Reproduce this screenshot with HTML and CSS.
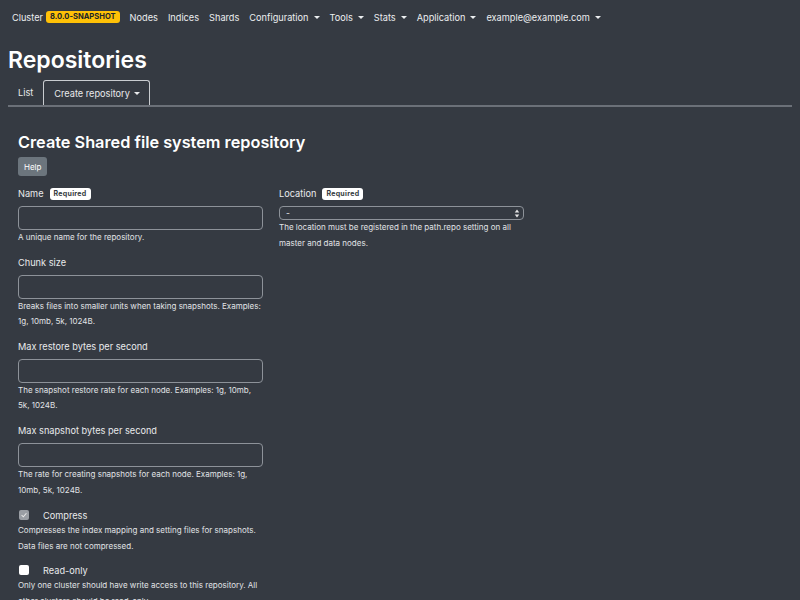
FILE: index.html
```html
<!DOCTYPE html>
<html>
<head>
<meta charset="utf-8">
<link rel="stylesheet" href="styles.css">
</head>
<body>
<nav class="navbar">
  <span class="nav-item">Cluster <span class="badge-version">8.0.0-SNAPSHOT</span></span>
  <span class="nav-item">Nodes</span>
  <span class="nav-item">Indices</span>
  <span class="nav-item">Shards</span>
  <span class="nav-item dropdown">Configuration</span>
  <span class="nav-item dropdown">Tools</span>
  <span class="nav-item dropdown">Stats</span>
  <span class="nav-item dropdown">Application</span>
  <span class="nav-item dropdown">example@example.com</span>
</nav>
<main class="page">
  <h1 class="page-title">Repositories</h1>
  <div class="tabs">
    <span class="tab">List</span>
    <span class="tab active dropdown">Create repository</span>
  </div>
  <section class="card">
    <h2 class="card-title">Create Shared file system repository</h2>
    <button class="btn-help">Help</button>
    <div class="form-grid">
      <div class="col">
        <div class="group">
          <label class="label">Name <span class="req">Required</span></label>
          <div class="input"></div>
          <div class="help">A unique name for the repository.</div>
        </div>
        <div class="group">
          <label class="label">Chunk size</label>
          <div class="input"></div>
          <div class="help">Breaks files into smaller units when taking snapshots. Examples: 1g, 10mb, 5k, 1024B.</div>
        </div>
        <div class="group">
          <label class="label">Max restore bytes per second</label>
          <div class="input"></div>
          <div class="help">The snapshot restore rate for each node. Examples: 1g, 10mb, 5k, 1024B.</div>
        </div>
        <div class="group">
          <label class="label">Max snapshot bytes per second</label>
          <div class="input"></div>
          <div class="help">The rate for creating snapshots for each node. Examples: 1g, 10mb, 5k, 1024B.</div>
        </div>
        <div class="group">
          <div class="check-row"><span class="check checked"><svg viewBox="0 0 10 10" width="8" height="8"><path d="M2 5.2 L4.2 7.3 L8 2.8" fill="none" stroke="#e8e8e8" stroke-width="1.3"/></svg></span><span class="check-label">Compress</span></div>
          <div class="help">Compresses the index mapping and setting files for snapshots. Data files are not compressed.</div>
        </div>
        <div class="group">
          <div class="check-row"><span class="check"></span><span class="check-label">Read-only</span></div>
          <div class="help">Only one cluster should have write access to this repository. All other clusters should be read-only.</div>
        </div>
      </div>
      <div class="col">
        <div class="group">
          <label class="label">Location <span class="req">Required</span></label>
          <div class="select"><span>-</span><svg class="sel-arrows" viewBox="0 0 6 10" width="6" height="9"><path d="M3 0.5 L5.5 4 L0.5 4 Z M3 9.5 L5.5 6 L0.5 6 Z" fill="#e6e6e6"/></svg></div>
          <div class="help">The location must be registered in the path.repo setting on all master and data nodes.</div>
        </div>
      </div>
    </div>
  </section>
</main>
</body>
</html>
```
FILE: styles.css
```css
* { box-sizing: border-box; }
html, body { margin: 0; padding: 0; }
body {
  background: #353a42;
  color: #e9eaec;
  font-family: Inter, "Noto Sans", sans-serif;
  height: 600px;
  overflow: hidden;
}
.navbar {
  display: flex;
  align-items: center;
  height: 34px;
  padding: 0 12px;
  gap: 10px;
  font-size: 9.2px;
  color: #eceef0;
}
.nav-item { display: inline-flex; align-items: center; white-space: nowrap; }
.dropdown::after {
  content: "";
  display: inline-block;
  margin-left: 5px;
  border-top: 3px solid currentColor;
  border-left: 3px solid transparent;
  border-right: 3px solid transparent;
}
.badge-version {
  background: #ffc107;
  color: #212529;
  font-weight: 700;
  font-size: 7.6px;
  border-radius: 3px;
  padding: 0 4px;
  height: 12px;
  line-height: 12px;
  margin-left: 3px;
}
.page { padding: 0 8px; }
.page-title {
  margin: 11px 0 5px;
  font-size: 23px;
  font-weight: 600;
  line-height: 30px;
  color: #fff;
}
.tabs {
  display: flex;
  align-items: flex-end;
  border-bottom: 2px solid #6b7078;
  height: 27px;
  font-size: 9.2px;
}
.tab {
  padding: 0 10px;
  height: 25px;
  display: inline-flex;
  align-items: center;
}
.tab.active {
  border: 1px solid #c9ccd0;
  border-bottom: none;
  border-radius: 3px 3px 0 0;
  padding: 0 9px 0 10px;
}
.tab.active::after { margin-left: 4px; }
.card { padding: 23px 10px 0; }
.card-title {
  margin: 0 0 3px;
  font-size: 16.3px;
  font-weight: 600;
  line-height: 24px;
  color: #fff;
}
.btn-help {
  display: block;
  background: #6c757d;
  color: #fff;
  border: none;
  border-radius: 3px;
  font-family: inherit;
  font-size: 8px;
  padding: 0 6px;
  height: 19px;
  margin-bottom: 10px;
}
.form-grid {
  display: grid;
  grid-template-columns: 245px 245px;
  column-gap: 16px;
}
.group { margin-bottom: 9px; }
.label {
  display: flex;
  align-items: center;
  font-size: 9.2px;
  line-height: 16px;
  height: 16px;
  margin-bottom: 4px;
  color: #e9eaec;
}
.req {
  display: inline-block;
  background: #fff;
  color: #343a40;
  font-size: 7px;
  font-weight: 700;
  letter-spacing: 0.3px;
  border-radius: 3px;
  padding: 0 4px;
  margin-left: 6px;
  height: 12px;
  line-height: 12px;
}
.input {
  height: 24px;
  border: 1px solid #8d9299;
  border-radius: 4px;
}
.select {
  height: 14px;
  border: 1px solid #8d9299;
  border-radius: 4px;
  display: flex;
  align-items: center;
  justify-content: space-between;
  padding: 0 3px 0 6px;
  font-size: 8.5px;
}
.help {
  font-size: 8px;
  line-height: 15.6px;
  color: #e1e3e6;
}
.group:nth-child(n+5) { margin-bottom: 8px; }
.check-row {
  display: flex;
  align-items: center;
  height: 16px;
  font-size: 9.2px;
}
.check {
  width: 10px;
  height: 10px;
  border-radius: 2px;
  background: #fff;
  margin: 0 14px 0 1px;
  display: inline-flex;
  align-items: center;
  justify-content: center;
}
.check.checked { background: #9a9ea4; }
```
